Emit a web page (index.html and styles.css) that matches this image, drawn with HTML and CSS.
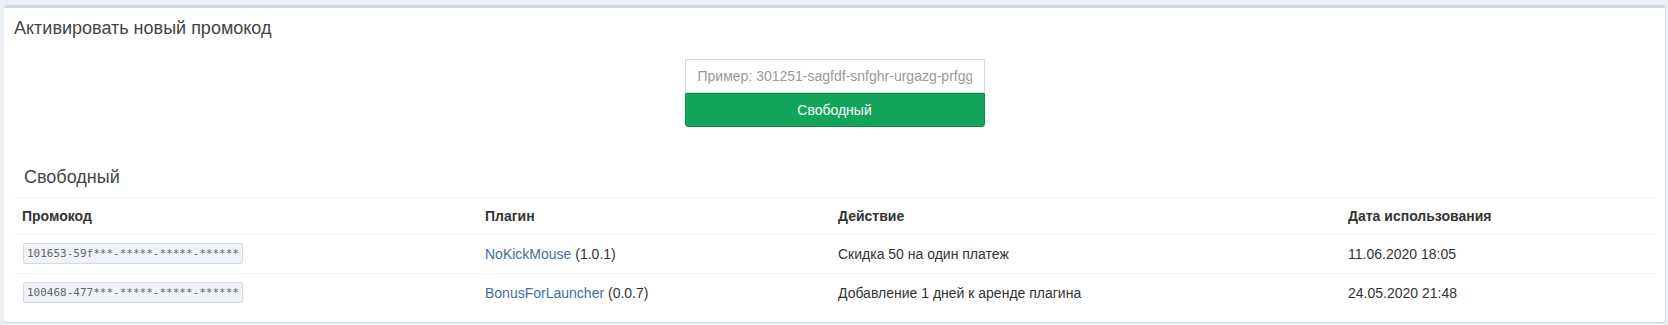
FILE: index.html
```html
<!DOCTYPE html>
<html lang="ru">
<head>
<meta charset="utf-8">
<title>Промокоды</title>
<link rel="stylesheet" href="styles.css">
</head>
<body>
<div class="box">
  <div class="box-header">
    <h3 class="box-title">Активировать новый промокод</h3>
  </div>
  <div class="box-body">
    <form class="promo-form">
      <input class="promo-input" type="text" placeholder="Пример: 301251-sagfdf-snfghr-urgazg-prfggg">
      <button class="btn-success" type="button">Свободный</button>
    </form>
    <div class="sub-header">
      <h3 class="box-title">Свободный</h3>
    </div>
    <table class="table">
      <colgroup>
        <col class="c1"><col class="c2"><col class="c3"><col class="c4">
      </colgroup>
      <thead>
        <tr><th>Промокод</th><th>Плагин</th><th>Действие</th><th>Дата использования</th></tr>
      </thead>
      <tbody>
        <tr>
          <td><span class="code">101653-59f***-*****-*****-******</span></td>
          <td><a href="#" class="link">NoKickMouse</a> (1.0.1)</td>
          <td>Скидка 50 на один платеж</td>
          <td>11.06.2020 18:05</td>
        </tr>
        <tr>
          <td><span class="code">100468-477***-*****-*****-******</span></td>
          <td><a href="#" class="link">BonusForLauncher</a> (0.0.7)</td>
          <td>Добавление 1 дней к аренде плагина</td>
          <td>24.05.2020 21:48</td>
        </tr>
      </tbody>
    </table>
  </div>
</div>
</body>
</html>
```
FILE: styles.css
```css
html, body {
  margin: 0;
  padding: 0;
}
body {
  background: #ecf0f5;
  font-family: "Liberation Sans", Arial, sans-serif;
  font-size: 14px;
  line-height: 20px;
  color: #333;
  padding: 5px 3px 3px 4px;
}
.box {
  background: #fff;
  border-top: 3px solid #d2d6de;
  border-radius: 3px;
  box-shadow: 0 1px 1px rgba(0, 0, 0, 0.12), 1px 0 1px rgba(0, 0, 0, 0.06);
}
.box-header {
  padding: 10px;
}
.box-title {
  margin: 0;
  font-size: 18px;
  font-weight: normal;
  line-height: 20px;
  color: #444;
}
.box-body {
  padding: 10px;
}
.promo-form {
  width: 300px;
  margin: 1px auto 0 auto;
  display: flex;
  flex-direction: column;
}
.promo-input {
  box-sizing: border-box;
  width: 300px;
  height: 34px;
  padding: 6px 12px;
  border: 1px solid #d2d6de;
  border-radius: 0;
  font-family: "Liberation Sans", Arial, sans-serif;
  font-size: 14px;
  color: #555;
  outline: none;
}
.promo-input::placeholder {
  color: #999;
}
.btn-success {
  box-sizing: border-box;
  width: 300px;
  height: 34px;
  background: #13a55c;
  border: 1px solid #0f8d4e;
  border-radius: 0 0 3px 3px;
  color: #fff;
  font-family: "Liberation Sans", Arial, sans-serif;
  font-size: 14px;
  padding: 0;
}
.sub-header {
  margin-top: 30px;
  padding: 10px;
  border-bottom: 1px solid #f4f4f4;
}
.table {
  width: 100%;
  border-collapse: collapse;
  table-layout: fixed;
}
.c1 { width: 463px; }
.c2 { width: 353px; }
.c3 { width: 510px; }
.c4 { width: auto; }
.table th {
  text-align: left;
  font-weight: bold;
  padding: 8px;
  line-height: 20px;
  border-bottom: 1px solid #f4f4f4;
}
.table td {
  padding: 8px;
  line-height: 22px;
  border-top: 1px solid #f4f4f4;
  vertical-align: top;
}
.code {
  display: inline-block;
  vertical-align: top;
  box-sizing: border-box;
  height: 21px;
  margin-left: 1px;
  padding: 0 3px;
  line-height: 19px;
  font-family: "DejaVu Sans Mono", "Liberation Mono", monospace;
  font-size: 11px;
  color: #666;
  background: #eff2f6;
  border: 1px solid #d6dbe1;
  border-radius: 2px;
}
.link {
  color: #456e9c;
  text-decoration: none;
}
```
